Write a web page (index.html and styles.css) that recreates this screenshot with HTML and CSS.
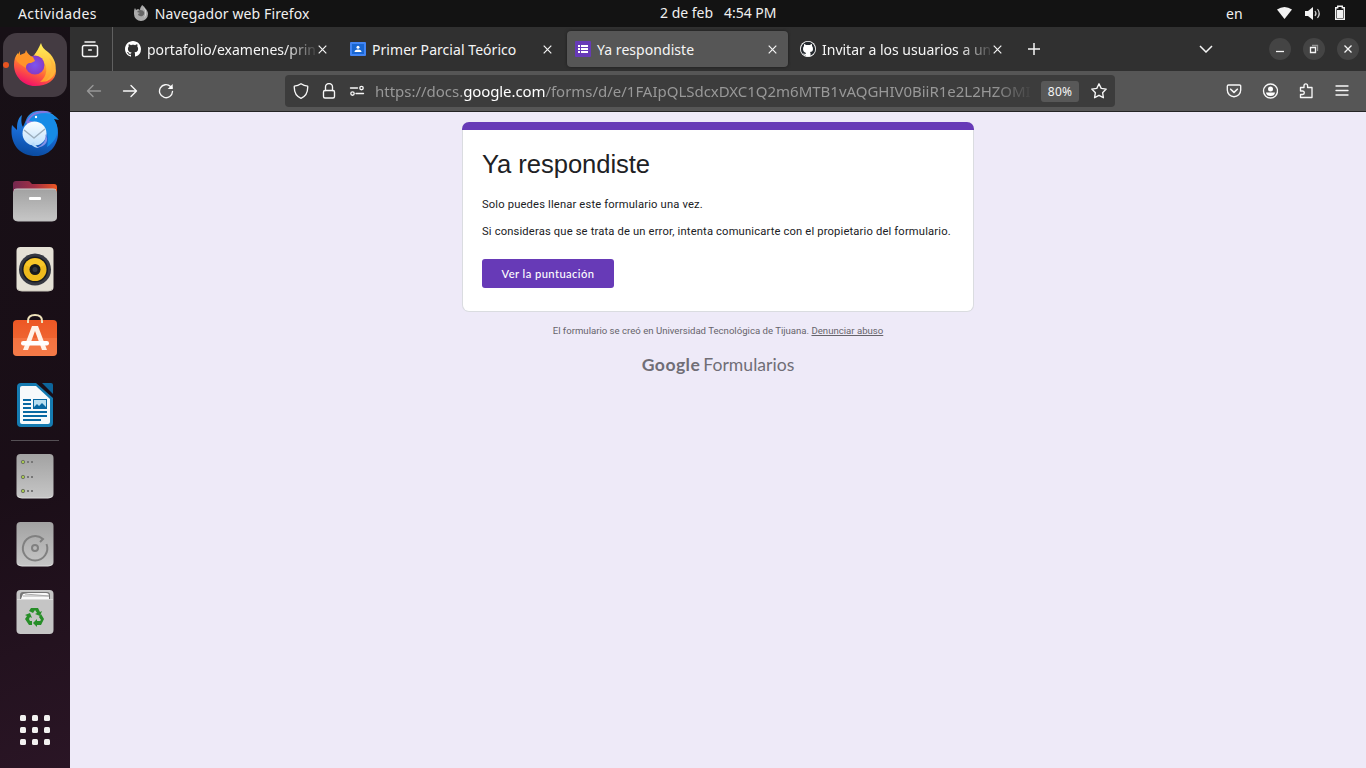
FILE: index.html
```html
<!DOCTYPE html>
<html lang="es">
<head>
<meta charset="utf-8">
<title>Ya respondiste</title>
<link rel="stylesheet" href="styles.css">
</head>
<body>
<header class="topbar">
  <span class="activities">Actividades</span>
  <svg class="app-icon" width="16" height="16" viewBox="0 0 16 16"><path d="M2 3 3 5 5 4 7 5C7 2 9 1 9 0c1 1 2 1 3 3 2 2 3 4 3 6a7 7 0 0 1-14 0C1 6 1 5 2 3Z" fill="#aaa"/><path d="M5 6c2-2 5-1 6 1 1 3-2 5-4 4-1 0-2-1-2-2l2-1-3-1Z" fill="#666"/><path d="M10 2c3 2 5 7 1 11 2-4 2-7-1-11Z" fill="#e2e2e2"/></svg>
  <span class="app-name">Navegador web Firefox</span>
  <span class="date">2 de feb</span><span class="time">4:54 PM</span>
  <span class="lang">en</span>
  <svg class="tray" width="90" height="27" viewBox="0 0 90 27" fill="#f2f2f2"><path d="M1 9.500Q8.500 4.500 16 9.500L8.500 19Z"/><path d="M29 11h3l5-4v13l-5-4h-3Z"/><path d="M39 11q2 2.500 0 5M41.500 9q3.500 4.500 0 9" fill="none" stroke="#ccc" stroke-width="1.200"/><path d="M61.700 6.200h4.600v1.500h2v11.600h-8.600V7.700h2Z" fill="none" stroke="#f2f2f2" stroke-width="1.400"/><path d="M61 10h6v8h-6Z"/></svg>
</header>
<div class="desktop">
<nav class="dock">
  <div class="dock-item active"><i class="running"></i>
    <svg width="48" height="48" viewBox="0 0 48 48"><defs><linearGradient id="fx" x1=".8" y1="0" x2=".3" y2="1"><stop offset="0" stop-color="#fff04a"/><stop offset=".35" stop-color="#ffb327"/><stop offset=".62" stop-color="#ff603b"/><stop offset="1" stop-color="#ef086e"/></linearGradient><radialGradient id="fp"><stop offset="0" stop-color="#7b55f0"/><stop offset="1" stop-color="#873bc5"/></radialGradient><linearGradient id="fy" x1="0" y1="0" x2="0" y2="1"><stop offset="0" stop-color="#fff15a"/><stop offset="1" stop-color="#ff9c2b"/></linearGradient></defs>
    <path d="M7 12l2 4 5-1 5 5c3-4 4-8 11-11 2 4 12 8 15 21 0 9-9 15-21 15S3 35 3 24c0-5 1-9 4-12Z" fill="url(#fx)"/><path d="M23 15c2-4 5-8 7-13 1 4 3 6 7 9 7 6 9 14 7 20-2 7-8 10-15 10 7-5 9-16 2-22-2-2-5-4-8-4Z" fill="url(#fy)"/><path d="M38 17c5 8 3 18-4 24 12-5 14-16 4-24Z" fill="#ffb43a" opacity=".7"/><circle cx="24" cy="24" r="9.500" fill="url(#fp)"/><path d="M9 10 9 14 14 12 15 9c1 3 4 6 7 7l2 4-4 2c-4 0-5 2-5 5-4-3-9-5-10-9Z" fill="#ff9429"/></svg></div>
  <div class="dock-item">
    <svg width="48" height="48" viewBox="0 0 48 48"><defs><linearGradient id="tb" x1=".6" y1="0" x2=".4" y2="1"><stop offset="0" stop-color="#2a97ee"/><stop offset=".55" stop-color="#1768d0"/><stop offset="1" stop-color="#0a4a9e"/></linearGradient><linearGradient id="env" x1="0" y1="0" x2="0" y2="1"><stop stop-color="#fafdff"/><stop offset="1" stop-color="#bfe1fc"/></linearGradient></defs><path d="M11 6C6 10 6 16 6 21L1 16C-2 34 8 47 25 47c13 0 22-10 22-23 0-7-3-12-6-15l5 1C42 3 31 0 22 3c-4 2-6 5-7 8l-3 7c-2-3-2-8-1-12Z" fill="url(#tb)"/><path d="M15 13C20 2 32-1 41 4c-9-1-13 2-17 5l-7 8Z" fill="#8277df"/><path d="M18 12c5-11 24-9 30-1l-5-1c7 10 3 22-7 28 2-9 1-18-6-23-4-3-8-3-12-3Z" fill="#168be6"/><circle cx="23.500" cy="24.500" r="12" fill="url(#env)"/><path d="M13 21l10 8 11-9" fill="none" stroke="#9caebd" stroke-width="1.500" stroke-linejoin="round"/><path d="M20 35q3 4 8 4-5-3-5-6Z" fill="#b8dcfa"/><path d="M34 25c2 6-2 11-9 14 10-1 14-8 9-14Z" fill="#8593e6"/><circle cx="25" cy="8" r="1.200" fill="#fff"/></svg></div>
  <div class="dock-item">
    <svg width="48" height="48" viewBox="0 0 48 48"><defs><linearGradient id="fo"><stop stop-color="#74284f"/><stop offset=".5" stop-color="#a33045"/><stop offset="1" stop-color="#ed5722"/></linearGradient><linearGradient id="gr" x1="0" y1="0" x2="0" y2="1"><stop stop-color="#a2a2a2"/><stop offset="1" stop-color="#c6c6c6"/></linearGradient></defs><path d="M2 7q0-3 3-3h12q2 0 3 2l1 1h22q3 0 3 3v15H2Z" fill="url(#fo)"/><rect x="2" y="12" width="44" height="32" rx="4" fill="url(#gr)"/><path d="M3 13q1-1 3-1h36q2 0 3 1" stroke="#ccc" fill="none"/><rect x="18" y="20" width="12" height="3" rx="1" fill="#fff"/><path d="M3 42q1 2 4 2h34q3 0 4-2" stroke="#bdbdbd" fill="none"/></svg></div>
  <div class="dock-item">
    <svg width="48" height="48" viewBox="0 0 48 48"><rect x="5.500" y="2" width="37" height="44" rx="4" fill="#e5e1d6"/><path d="M7 44q1 2 4 2h26q3 0 4-2" stroke="#c8c4b9" fill="none"/><circle cx="24" cy="24.500" r="16" fill="#363942"/><circle cx="24" cy="24.500" r="13" fill="#171b21"/><circle cx="24" cy="24.500" r="11.500" fill="#eebb1d"/><path d="M14 20a11 11 0 0 1 20 0l-10 4Z" fill="#ffcf32" opacity=".6"/><circle cx="24" cy="24.500" r="5.500" fill="#17191d"/><circle cx="24" cy="24.500" r="2.500" fill="#333842"/></svg></div>
  <div class="dock-item">
    <svg width="48" height="48" viewBox="0 0 48 48"><defs><linearGradient id="so" x1="0" y1="0" x2="0" y2="1"><stop stop-color="#ed5724"/><stop offset="1" stop-color="#f0703c"/></linearGradient></defs><rect x="2" y="7" width="44" height="36" rx="4" fill="url(#so)"/><path d="M2 25h44v14q0 4-4 4H6q-4 0-4-4Z" fill="#ff9566" opacity=".3"/><path d="M17 10V8q0-6 7-6t7 6v2" fill="none" stroke="#eee2ba" stroke-width="2"/><path d="M21 13h6l9 24h-5L24 18 17 37h-5Z" fill="#fff2e8"/><rect x="10" y="28" width="28" height="4.500" rx="2.200" fill="#fff"/></svg></div>
  <div class="dock-item">
    <svg width="48" height="48" viewBox="0 0 48 48"><path d="M10 2h15l17 15v25q0 4-4 4H10q-4 0-4-4V6q0-4 4-4Z" fill="#157bb1"/><path d="M31 2h9q2 0 2 2v9Z" fill="#0d659b"/><path d="M11 5h14l14 13v23q0 2-2 2H11q-2 0-2-2V7q0-2 2-2Z" fill="#f7fafb"/><path d="M12 19h8M12 23h8M12 27h8M12 31h24M12 35h24M12 39h18" stroke="#0868a2" stroke-width="1.800"/><rect x="22" y="18" width="14" height="10" fill="#0868a2"/><path d="M23 26V19h12v7l-4-4-3 3-2-2Z" fill="#b8dff1"/></svg></div>
  <hr class="dock-sep">
  <div class="dock-item">
    <svg width="48" height="48" viewBox="0 0 48 48"><rect x="5.500" y="2" width="37" height="44" rx="4" fill="url(#gr)"/><path d="M7 44q1 2 4 2h26q3 0 4-2" stroke="#ddd" fill="none"/><g fill="#a7c84d" stroke="#6f7564"><circle cx="12" cy="10" r="1.700"/><circle cx="12" cy="25" r="1.700"/><circle cx="12" cy="39" r="1.700"/></g><path d="M16 10h2m2 0h2M16 25h2m2 0h2M16 39h2m2 0h2" stroke="#777" stroke-width="2"/></svg></div>
  <div class="dock-item">
    <svg width="48" height="48" viewBox="0 0 48 48"><rect x="5.500" y="2" width="37" height="44" rx="4" fill="url(#gr)"/><path d="M7 44q1 2 4 2h26q3 0 4-2" stroke="#ddd" fill="none"/><g fill="none" stroke="#808080" stroke-width="2"><circle cx="24" cy="28" r="3"/><path d="M35.500 24A12.200 12.200 0 1 1 32 19l-3 3"/></g></svg></div>
  <div class="dock-item">
    <svg width="48" height="48" viewBox="0 0 48 48"><rect x="5.500" y="2" width="37" height="44" rx="4" fill="#c5c5c5"/><path d="M9 11V7q0-3 3-3h24q3 0 3 3v4Z" fill="#777"/><path d="M10 11 12 6l5-1h18q3 0 3 3v3Z" fill="#fafafa"/><path d="M14 6l24 2M12 8h26" stroke="#aaa"/><path d="M6 11.500h36" stroke="#ddd"/><g fill="#278e28"><path d="M20 20h7l2 4 2-1-2 5-5-2 2-1-2-3-2 3-4-2Z"/><path d="m30 26 3 5-3 6h-4v2l-4-4 4-4v2h3l1-1-2-3Z"/><path d="M21 33v4h-3l-4-6 2-3-2-1 5-2 2 5-2-1-1 2 1 2Z"/></g></svg></div>
  <div class="dock-item apps">
    <svg width="48" height="48" viewBox="0 0 48 48" fill="#f2f1f0"><g id="dots"><rect x="9" y="9" width="6" height="6" rx="1.500"/><rect x="21" y="9" width="6" height="6" rx="1.500"/><rect x="33" y="9" width="6" height="6" rx="1.500"/></g><use href="#dots" y="12"/><use href="#dots" y="24"/></svg></div>
</nav>
<main class="window">
  <div class="tabbar">
    <div class="view"><svg width="18" height="18" viewBox="0 0 18 18" fill="none" stroke="#f5f5f5" stroke-width="1.500" stroke-linecap="round"><path d="M4 1h10M3 4.500h12a1.500 1.500 0 0 1 1.500 1.500v8a1.500 1.500 0 0 1-1.500 1.500H3A1.500 1.500 0 0 1 1.500 14V6A1.500 1.500 0 0 1 3 4.500ZM7.700 9h2.600"/></svg></div>
    <div class="tab">
      <svg width="16" height="16" viewBox="0 0 16 16" fill="#fff"><path d="M8 0C3.580 0 0 3.580 0 8c0 3.540 2.290 6.530 5.470 7.590.4.070.55-.17.55-.38 0-.19-.01-.82-.01-1.490-2.010.37-2.530-.49-2.690-.94-.09-.23-.48-.94-.82-1.130-.28-.15-.68-.52-.01-.53.63-.01 1.080.58 1.230.82.72 1.210 1.870.87 2.330.66.07-.52.28-.87.51-1.070-1.780-.2-3.640-.89-3.640-3.950 0-.87.31-1.590.82-2.150-.08-.2-.36-1.020.08-2.120 0 0 .67-.21 2.200.82.64-.18 1.320-.27 2-.27s1.360.09 2 .27c1.530-1.040 2.200-.82 2.200-.82.44 1.100.16 1.920.08 2.120.51.56.82 1.270.82 2.150 0 3.070-1.870 3.750-3.650 3.950.29.25.54.73.54 1.480 0 1.070-.01 1.930-.01 2.200 0 .21.15.46.55.38A8.010 8.010 0 0 0 16 8c0-4.420-3.580-8-8-8Z"/></svg>
      <span class="tab-text fade">portafolio/examenes/prin</span><svg class="x" viewBox="0 0 9 9"><path d="m.7.700 7.600 7.600m0-7.600L.7 8.300"/></svg></div>
    <div class="tab">
      <svg width="16" height="16" viewBox="0 0 16 16"><rect y="1" width="16" height="14" rx="1" fill="#4285f4"/><rect x="2" y="3" width="12" height="10" fill="#1967d2"/><circle cx="8" cy="6.300" r="1.500" fill="#fff"/><path d="M4.500 11q0-2.500 3.500-2.500t3.500 2.500Z" fill="#fff"/></svg>
      <span class="tab-text t2">Primer Parcial Teórico</span><svg class="x" viewBox="0 0 9 9"><path d="m.7.700 7.600 7.600m0-7.600L.7 8.300"/></svg></div>
    <div class="tab selected">
      <svg width="16" height="16" viewBox="0 0 16 16"><rect width="16" height="16" rx="1" fill="#673ab7"/><path d="M3 5h2m1 0h7M3 8h2m1 0h7M3 11h2m1 0h7" stroke="#fff" stroke-width="2"/></svg>
      <span class="tab-text t3">Ya respondiste</span><svg class="x" viewBox="0 0 9 9"><path d="m.7.700 7.600 7.600m0-7.600L.7 8.300"/></svg></div>
    <div class="tab">
      <svg width="16" height="16" viewBox="0 0 16 16"><circle cx="8" cy="8" r="8" fill="#fff"/><circle cx="8" cy="8" r="7.200" fill="#24292e"/><path d="M4 3q1 0 2 1h4q1-1 2-1v2q1 1 1 3c0 2-1 3-3 3l.5 1v3q-2.500 1-5 0v-1q-2 0-2.500-2 1 1 2.500 1l.5-1C4 11 3 10 3 8q0-2 1-3Z" fill="#fff"/></svg>
      <span class="tab-text fade">Invitar a los usuarios a un</span><svg class="x" viewBox="0 0 9 9"><path d="m.7.700 7.600 7.600m0-7.600L.7 8.300"/></svg></div>
    <svg class="plus" width="12" height="12" viewBox="0 0 12 12"><path d="M6 0v12M0 6h12"/></svg>
    <svg class="chevron" width="14" height="8" viewBox="0 0 14 8"><path d="m1 1 6 6 6-6"/></svg>
    <div class="win-buttons">
      <svg width="22" height="22" viewBox="0 0 22 22"><circle cx="11" cy="11" r="11"/><path d="M7 13.500h8"/></svg>
      <svg width="22" height="22" viewBox="0 0 22 22"><circle cx="11" cy="11" r="11"/><path d="M7.500 9.500h5v5h-5Z"/><path d="M9 7.500h5.500V13" opacity=".45"/></svg>
      <svg width="22" height="22" viewBox="0 0 22 22"><circle cx="11" cy="11" r="11"/><path d="m7.500 7.500 7 7m0-7-7 7"/></svg>
    </div>
  </div>
  <div class="toolbar">
    <div class="nav-buttons">
      <svg width="16" height="16" viewBox="0 0 16 16" opacity=".4"><path d="M14.500 8H1.500M7 2.500 1.500 8 7 13.500"/></svg>
      <svg width="16" height="16" viewBox="0 0 16 16"><path d="M1.500 8h13M9 2.500 14.500 8 9 13.500"/></svg>
      <svg width="16" height="16" viewBox="0 0 16 16"><path d="M14.500 8.500A6.500 6.500 0 1 1 12.500 3.500L14 5"/><path d="M14.700 1v5H9.700Z" fill="#fff" stroke="none"/></svg>
    </div>
    <div class="urlbar">
      <svg width="16" height="16" viewBox="0 0 16 16"><path d="M8 .8q3 2.200 6.700 2.400C15 9 12.500 13.500 8 15.300 3.500 13.500 1 9 1.300 3.200 5 3 8 .8 8 .8Z"/></svg>
      <svg width="16" height="16" viewBox="0 0 16 16"><rect x="2.500" y="7.500" width="11" height="7.500" rx="1.500"/><path d="M4.500 7.500V4a3.500 3.500 0 0 1 7 0v3.500"/></svg>
      <svg width="16" height="16" viewBox="0 0 16 16"><path d="M1.500 5h7M7 10.500h7.500"/><circle cx="12.500" cy="5" r="1.700"/><circle cx="3.500" cy="10.500" r="1.700"/></svg>
      <div class="url"><span>https://docs.</span><span class="domain">google.com</span><span>/forms/d/e/1FAIpQLSdcxDXC1Q2m6MTB1vAQGHIV0BiiR1e2L2HZOMI</span></div>
      <span class="zoom">80%</span>
      <svg class="star" width="16" height="16" viewBox="0 0 16 16"><path d="m8 .8 2.200 4.600 5 .7-3.600 3.600.8 5L8 12.300l-4.400 2.400.8-5L.8 6.100l5-.7Z"/></svg>
    </div>
    <div class="tools">
      <svg width="16" height="16" viewBox="0 0 16 16"><path d="M2.500 2h11a1.200 1.200 0 0 1 1.200 1.200V7A6.700 6.700 0 0 1 1.300 7V3.200A1.200 1.200 0 0 1 2.500 2Z"/><path d="M4.700 6.200 8 9.400l3.300-3.200" stroke-width="1.600"/></svg>
      <svg width="16" height="16" viewBox="0 0 16 16"><circle cx="8.500" cy="8" r="7"/><circle cx="8.500" cy="6" r="2.500" fill="#fff" stroke="none"/><path d="M4 9.500h9Q12.500 13 8.500 13T4 9.500Z" fill="#fff" stroke="none"/></svg>
      <svg width="16" height="16" viewBox="0 0 16 16"><path d="M2.500 4.500H6V2.700Q6 .8 7.800.8t1.800 1.900v1.800H14v10H2.500v-3h2.200q1.600 0 1.600-1.700T4.700 8H2.500Z"/></svg>
      <svg width="16" height="16" viewBox="0 0 16 16"><path d="M2 3h12M2 7.500h12M2 12h12"/></svg>
    </div>
  </div>
  <div class="page">
    <section class="card">
      <h1>Ya respondiste</h1>
      <p>Solo puedes llenar este formulario una vez.</p>
      <p>Si consideras que se trata de un error, intenta comunicarte con el propietario del formulario.</p>
      <a class="button"><span>Ver la puntuación</span></a>
    </section>
    <p class="note">El formulario se creó en Universidad Tecnológica de Tijuana. <u>Denunciar abuso</u></p>
    <div class="brand"><span class="google">Google</span><span>Formularios</span></div>
  </div>
</main>
</div>
</body>
</html>
```
FILE: styles.css
```css
* { box-sizing: border-box; }
body { margin: 0; width: 1366px; height: 768px; overflow: hidden; font: 14px/20px "Noto Sans", sans-serif; color: #f5f5f5; display: flex; flex-direction: column; }
svg { display: block; flex: none; }
span { white-space: nowrap; }
.topbar { height: 27px; flex: none; background: #131313; display: flex; align-items: center; color: #f0f0f0; }
.activities { margin-left: 18px; width: 115px; letter-spacing: .38px; }
.app-icon { margin-bottom: 2px; }
.app-name { margin-left: 6px; width: 505px; letter-spacing: .12px; }
.date { width: 64px; margin-left: 1px; }
.date, .time { padding-bottom: 1px; }
.time { width: 503px; }
.lang { width: 50px; }
.desktop { display: flex; flex: 1; min-height: 0; }
.dock { width: 70px; background: linear-gradient(160deg, #171016, #1a0e17 60%, #2a1525); display: flex; flex-direction: column; align-items: center; gap: 4px; padding: 6px 0; }
.dock-item { position: relative; width: 64px; height: 64px; display: grid; place-items: center; flex: none; }
.active { background: #443b42; border-radius: 14px; }
.running { position: absolute; left: 0; top: 29px; width: 6px; height: 6px; border-radius: 50%; background: #e95420; }
.dock-sep { width: 48px; height: 1px; margin: -1px 0; border: 0; background: #555055; flex: none; }
.apps { margin-top: auto; }
.window { flex: 1; display: flex; flex-direction: column; min-width: 0; }
.tabbar { height: 44px; background: #303030; display: flex; align-items: center; gap: 4px; }
.view { width: 43px; height: 44px; border-right: 1px solid #606060; padding: 14px 0 0 11px; }
.tab { width: 221px; height: 36px; border-radius: 4px; padding: 0 11px 0 8px; display: flex; align-items: center; }
.selected { background: #565656; box-shadow: 0 0 3px #1c1c1c; }
.tab-text { width: 171px; margin-left: 6px; padding-top: 1px; }
.t2, .t3 { letter-spacing: .05px; }
.fade { mask-image: linear-gradient(to right, #000 138px, transparent 172px); }
.x { width: 9px; height: 9px; }
.x path, .plus path, .chevron path { fill: none; stroke: #f5f5f5; stroke-width: 1.2; }
.plus { margin-left: 11px; }
.plus path { stroke-width: 1.5; }
.chevron { margin-left: 155px; }
.chevron path { stroke-width: 1.5; }
.win-buttons { display: flex; gap: 12px; margin-left: 52px; }
.win-buttons circle { fill: #444; }
.win-buttons path { fill: none; stroke: #f5f5f5; stroke-width: 1.3; }
.toolbar { height: 41px; background: #565656; border-bottom: 1px solid #242424; display: flex; align-items: center; }
.toolbar svg { fill: none; stroke: #f7f7f7; stroke-width: 1.35; stroke-linejoin: round; stroke-linecap: round; }
.nav-buttons { display: flex; gap: 20px; width: 215px; padding-left: 16px; }
.urlbar { width: 830px; height: 32px; border-radius: 4px; background: #3c3c3c; display: flex; align-items: center; padding-left: 8px; gap: 12px; }
.url { width: 656px; margin-left: -2px; white-space: nowrap; font-size: 15px; letter-spacing: -.02px; color: #989898; mask-image: linear-gradient(to right, #000 618px, transparent 658px); }
.domain { color: #fff; letter-spacing: -.1px; }
.zoom { width: 38px; height: 21px; margin-left: -2px; border-radius: 3px; background: #585858; font-size: 12px; letter-spacing: .2px; line-height: 21px; text-align: center; }
.tools { display: flex; gap: 20px; margin-left: 111px; }
.page { flex: 1; background: #eeeaf8; display: flex; flex-direction: column; align-items: center; padding-top: 10px; font-family: Roboto, sans-serif; }
.card { width: 512px; height: 190px; background: #fff; border: 1px solid #dadce0; border-top: 0; border-radius: 7px; color: #202124; padding: 24px 19px 0; position: relative; }
.card::before { content: ""; position: absolute; left: -1px; right: -1px; top: 0; height: 8px; border-radius: 7px 7px 0 0; background: #673ab7; }
h1 { font: 400 25.6px/36px "Liberation Sans", Arial, sans-serif; letter-spacing: -.06px; margin: 0 0 15px; white-space: nowrap; }
.card p { font-size: 11.2px; line-height: 16px; letter-spacing: .163px; margin: 0 0 11px; white-space: nowrap; }
.button { display: flex; width: 132px; height: 29px; margin-top: 19px; align-items: center; justify-content: center; background: #673ab7; color: #fff; border-radius: 3px; font: 500 11.2px/16px Lato, sans-serif; letter-spacing: .42px; }
.note { margin: 12px 0 0; font-size: 9.6px; line-height: 14px; color: #66646b; white-space: nowrap; }
.note u { text-underline-offset: 1px; }
.brand { display: flex; gap: 3px; margin-top: 14px; font: 17.6px/26px Lato, sans-serif; color: #706e76; }
.google { font-weight: 700; letter-spacing: .45px; }
```
